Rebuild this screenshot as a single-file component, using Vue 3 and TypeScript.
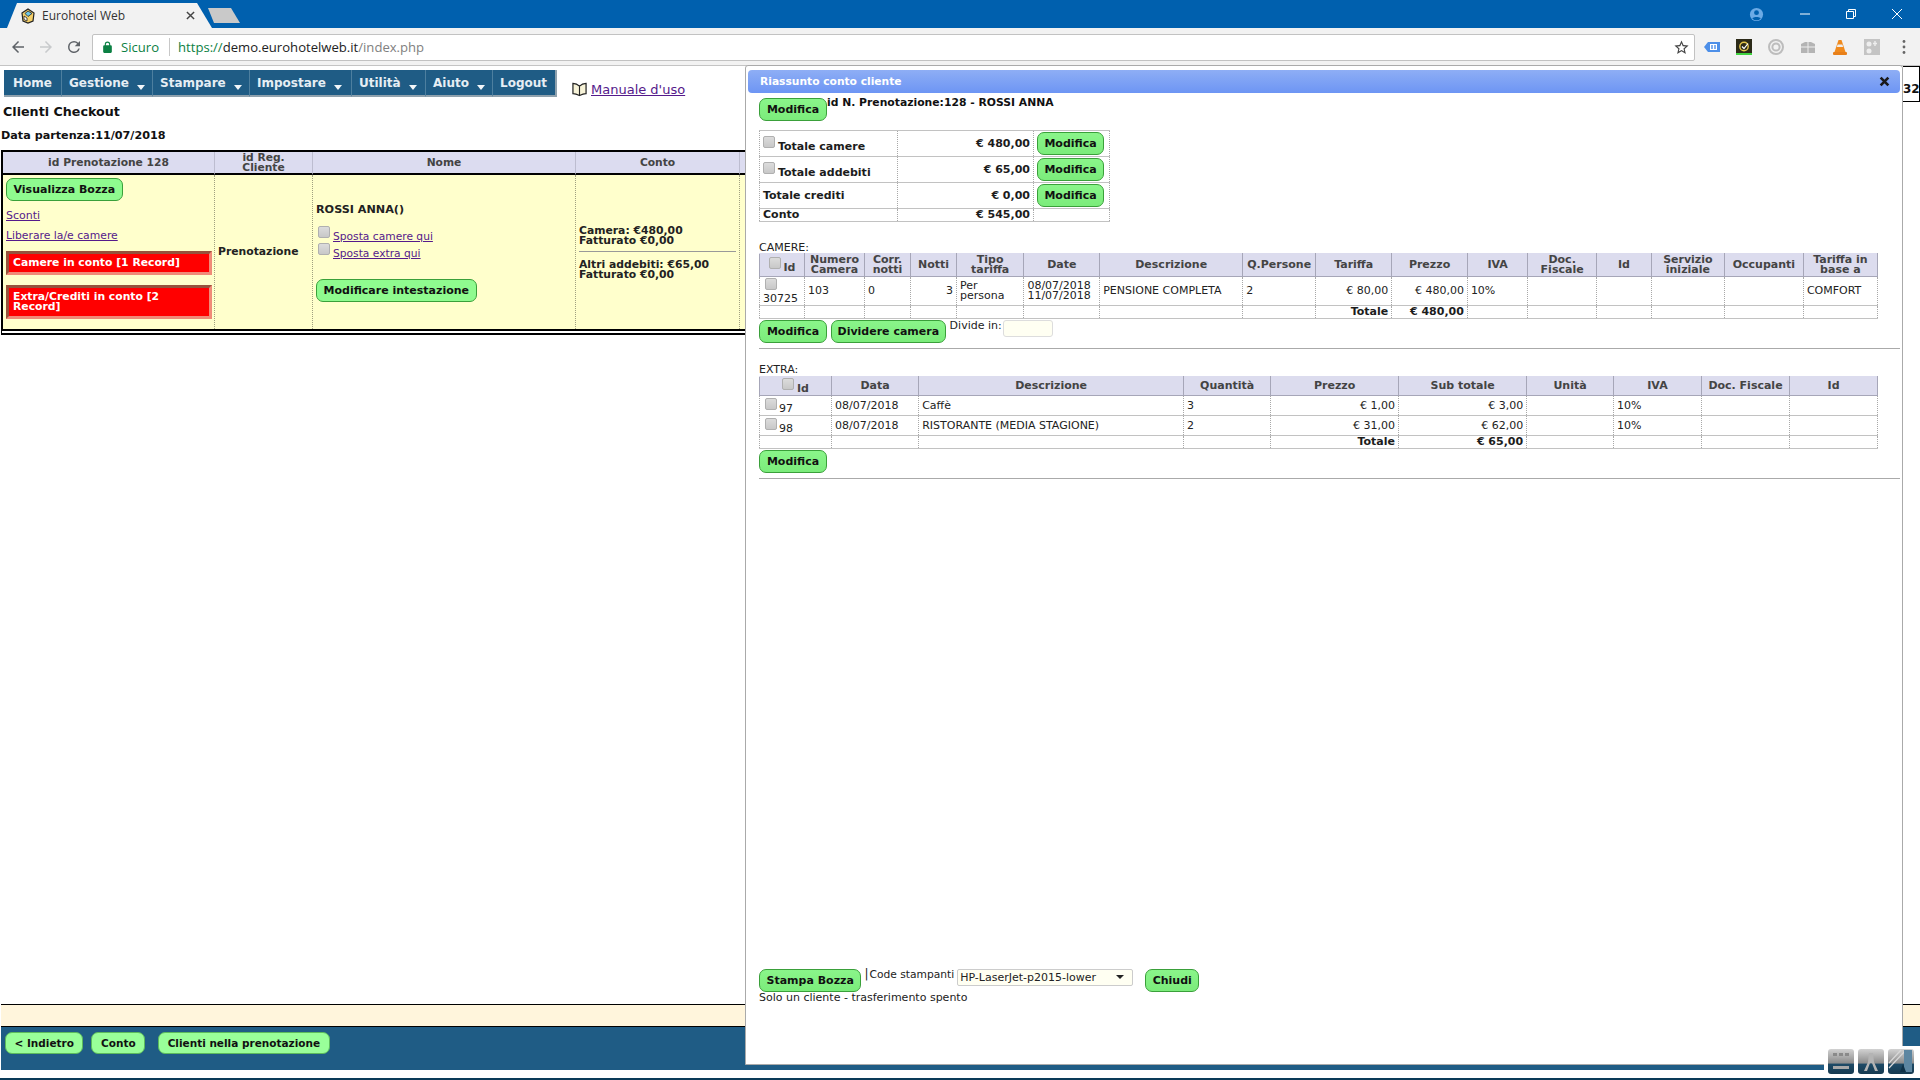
<script setup lang="ts">
const menu = [
  { label: 'Home', caret: false, width: 57 },
  { label: 'Gestione', caret: true, width: 91 },
  { label: 'Stampare', caret: true, width: 97 },
  { label: 'Impostare', caret: true, width: 102 },
  { label: 'Utilità', caret: true, width: 74 },
  { label: 'Aiuto', caret: true, width: 67 },
  { label: 'Logout', caret: false, width: 65 }
];

const summary = [
  { label: 'Totale camere', value: '€ 480,00', check: true },
  { label: 'Totale addebiti', value: '€ 65,00', check: true },
  { label: 'Totale crediti', value: '€ 0,00', check: false }
];

const roomCols = [45, 60, 46, 46, 67.4, 75.8, 143, 73, 76, 75.7, 60.5, 68.5, 55, 73, 79, 74];
const roomHead = [
  'Numero Camera', 'Corr. notti', 'Notti', 'Tipo tariffa', 'Date', 'Descrizione', 'Q.Persone', 'Tariffa',
  'Prezzo', 'IVA', 'Doc. Fiscale', 'Id', 'Servizio iniziale', 'Occupanti', 'Tariffa in base a'
];

const extraCols = [72, 87.2, 264.8, 87.3, 127.7, 128.2, 86.8, 88, 88.1, 88];
const extraHead = ['Data', 'Descrizione', 'Quantità', 'Prezzo', 'Sub totale', 'Unità', 'IVA', 'Doc. Fiscale', 'Id'];
const extraRows = [
  { id: '97', date: '08/07/2018', desc: 'Caffè', qty: '3', price: '€ 1,00', sub: '€ 3,00' },
  { id: '98', date: '08/07/2018', desc: 'RISTORANTE (MEDIA STAGIONE)', qty: '2', price: '€ 31,00', sub: '€ 62,00' }
];
</script>

<template>
  <div class="screen">
    <div class="tabstrip">
      <div class="tab">
        <svg class="favicon" viewBox="0 0 16 16">
          <path d="M2 5l6-4 6 4-1 8-5 2-5-2z" fill="#f4d06a" stroke="#222" stroke-width="1.2" />
          <path d="M8 3l4 2.5-4 3-3-3z" fill="#6ec6e8" stroke="#222" stroke-width=".8" />
          <path d="M4 8l3 2v3l-3-1.5z" fill="#fff" stroke="#222" stroke-width=".8" />
        </svg>
        <span class="tab-title">Eurohotel Web</span>
        <svg class="tab-close" viewBox="0 0 10 10"><path d="M1 1l8 8M9 1l-8 8" stroke="#444" stroke-width="1.6" /></svg>
      </div>
      <div class="new-tab"></div>
      <div class="window-controls">
        <svg class="profile" viewBox="0 0 16 16">
          <circle cx="8" cy="8" r="7" fill="#6cabe6" />
          <circle cx="8" cy="6" r="2.6" fill="#0060ae" />
          <path d="M3.5 12.2c1-2.2 8-2.2 9 0a6 6 0 0 1-9 0z" fill="#0060ae" />
        </svg>
        <svg class="win-icon" viewBox="0 0 12 12"><path d="M1 6h10" stroke="#fff" stroke-width="1" /></svg>
        <svg class="win-icon" viewBox="0 0 12 12"><path d="M1.5 3.5h7v7h-7zM3.5 3.5v-2h7v7h-2" fill="none" stroke="#fff" stroke-width="1" /></svg>
        <svg class="win-icon" viewBox="0 0 12 12"><path d="M1 1l10 10M11 1L1 11" stroke="#fff" stroke-width="1" /></svg>
      </div>
    </div>

    <div class="toolbar">
      <svg class="nav-icon" viewBox="0 0 24 24"><path d="M20 11H7.83l5.59-5.59L12 4l-8 8 8 8 1.41-1.41L7.83 13H20v-2z" fill="#5f6368" /></svg>
      <svg class="nav-icon" viewBox="0 0 24 24"><path d="M4 11h12.17l-5.59-5.59L12 4l8 8-8 8-1.41-1.41L16.17 13H4v-2z" fill="#c8cacc" /></svg>
      <svg class="nav-icon" viewBox="0 0 24 24"><path d="M17.65 6.35A7.95 7.95 0 0 0 12 4a8 8 0 1 0 7.75 10h-2.08A6 6 0 1 1 12 6c1.66 0 3.14.69 4.22 1.78L13 11h7V4l-2.35 2.35z" fill="#5f6368" /></svg>
      <div class="omnibox">
        <svg class="lock" viewBox="0 0 24 24"><path d="M18 8h-1V6a5 5 0 0 0-10 0v2H6a2 2 0 0 0-2 2v10a2 2 0 0 0 2 2h12a2 2 0 0 0 2-2V10a2 2 0 0 0-2-2zM9 8V6a3 3 0 0 1 6 0v2z" fill="#0b8043" /></svg>
        <span class="secure">Sicuro</span>
        <span class="url"><span class="url-scheme">https://</span>demo.eurohotelweb.it<span class="url-path">/index.php</span></span>
        <svg class="star" viewBox="0 0 24 24"><path d="M22 9.24l-7.19-.62L12 2 9.19 8.63 2 9.24l5.46 4.73L5.82 21 12 17.27 18.18 21l-1.63-7.03L22 9.24zM12 15.4l-3.76 2.27 1-4.28-3.32-2.88 4.38-.38L12 6.1l1.71 4.04 4.38.38-3.32 2.88 1 4.28L12 15.4z" fill="#444" /></svg>
      </div>
      <div class="extensions">
        <svg viewBox="0 0 16 16"><path d="M0 8l4-5h12v10H4z" fill="#4d8fe8" /><rect x="6" y="5" width="7" height="6" fill="#fff" /><path d="M8 6v4M11 6v4" stroke="#4d8fe8" stroke-width="1.4" /></svg>
        <svg viewBox="0 0 16 16"><rect width="16" height="16" fill="#2c2a18" /><rect y="14" width="16" height="2" fill="#3fd23f" /><circle cx="8" cy="7.5" r="4.2" fill="none" stroke="#e3c44a" stroke-width="1.4" /><path d="M6 7.5l2 2 4-5" fill="none" stroke="#fff" stroke-width="1.2" /></svg>
        <svg viewBox="0 0 16 16"><circle cx="8" cy="8" r="7" fill="none" stroke="#bdbdbd" stroke-width="2" /><circle cx="8" cy="8" r="3.6" fill="none" stroke="#bdbdbd" stroke-width="2" /></svg>
        <svg viewBox="0 0 16 16"><path d="M1 5l4-2h6l4 2v9H1z" fill="#b4b4b4" /><path d="M8 3v11M1 8h14" stroke="#eee" stroke-width="1" /></svg>
        <svg viewBox="0 0 16 16"><path d="M6.5 1h3l4 12h-11z" fill="#f08a1d" /><path d="M5.6 5.5h4.8l.7 2.5H4.8z" fill="#eee" /><rect x="1" y="13" width="14" height="3" rx="1" fill="#e8801a" /></svg>
        <svg viewBox="0 0 16 16"><rect width="16" height="16" fill="#c4c4c4" /><circle cx="5" cy="5" r="2.5" fill="#eee" /><circle cx="5" cy="12" r="2.5" fill="#eee" /><path d="M11 2v5M9 4.5h4" stroke="#eee" stroke-width="1.4" /></svg>
        <svg class="dots" viewBox="0 0 4 16"><circle cx="2" cy="2.5" r="1.4" fill="#666" /><circle cx="2" cy="8" r="1.4" fill="#666" /><circle cx="2" cy="13.5" r="1.4" fill="#666" /></svg>
      </div>
    </div>

    <div class="page">
      <nav class="menu">
        <a v-for="m in menu" :key="m.label" class="menu-item" :style="{ width: m.width + 'px' }">
          {{ m.label }}<i v-if="m.caret" class="caret"></i>
        </a>
        <div class="manual">
          <svg class="book" viewBox="0 0 16 16">
            <path d="M1 2c2 0 5 1 7 3 2-2 5-3 7-3v11c-2 0-5 1-7 2-2-1-5-2-7-2z" fill="#f7f3d8" stroke="#222" stroke-width="1.3" />
            <path d="M8 5v10" stroke="#222" stroke-width="1.2" />
          </svg>
          <a class="link manual-link">Manuale d'uso</a>
        </div>
      </nav>

      <h2 class="page-title">Clienti Checkout</h2>
      <div class="departure">Data partenza:11/07/2018</div>

      <table class="checkout">
        <colgroup>
          <col style="width: 212px" />
          <col style="width: 98px" />
          <col style="width: 263px" />
          <col style="width: 164px" />
          <col />
        </colgroup>
        <thead>
          <tr>
            <th>id Prenotazione 128</th>
            <th>id Reg.<br />Cliente</th>
            <th>Nome</th>
            <th>Conto</th>
            <th></th>
          </tr>
        </thead>
        <tbody>
          <tr>
            <td class="col-actions">
              <button class="btn">Visualizza Bozza</button>
              <a class="link sconti">Sconti</a>
              <a class="link liberare">Liberare la/e camere</a>
              <div class="alert">Camere in conto [1 Record]</div>
              <div class="alert alert-tall">Extra/Crediti in conto [2 Record]</div>
            </td>
            <td class="col-type">Prenotazione</td>
            <td class="col-name">
              <div class="guest">ROSSI ANNA()</div>
              <label class="move"><input type="checkbox" class="check" /><a class="link">Sposta camere qui</a></label>
              <label class="move"><input type="checkbox" class="check" /><a class="link">Sposta extra qui</a></label>
              <button class="btn heading-btn">Modificare intestazione</button>
            </td>
            <td class="col-bill">
              <div>Camera: €480,00<br />Fatturato €0,00</div>
              <hr class="bill-line" />
              <div>Altri addebiti: €65,00<br />Fatturato €0,00</div>
            </td>
            <td></td>
          </tr>
        </tbody>
      </table>

      <div class="spacer"></div>
      <div class="notice"></div>
      <div class="footer">
        <button class="btn btn-foot">&lt; Indietro</button>
        <button class="btn btn-foot">Conto</button>
        <button class="btn btn-foot">Clienti nella prenotazione</button>
      </div>
      <div class="strip"></div>
      <div class="taskbar"></div>

      <div class="peek">32</div>

      <section class="dialog">
        <header class="dialog-title">
          <span>Riassunto conto cliente</span>
          <svg class="dialog-close" viewBox="0 0 10 10"><path d="M1.5 1.5l7 7M8.5 1.5l-7 7" stroke="#1a1a1a" stroke-width="2.4" /></svg>
        </header>
        <div class="dialog-body">
          <div class="booking">
            <button class="btn btn-modal">Modifica</button>
            <strong class="booking-title">id N. Prenotazione:128 - ROSSI ANNA</strong>
          </div>

          <table class="grid summary">
            <colgroup>
              <col style="width: 137.5px" />
              <col style="width: 136.5px" />
              <col style="width: 76px" />
            </colgroup>
            <tr v-for="s in summary" :key="s.label" class="summary-row">
              <td class="strong">
                <input v-if="s.check" type="checkbox" class="check check-summary" /><span :class="{ 'low-label': s.check }">{{ s.label }}</span>
              </td>
              <td class="strong right">{{ s.value }}</td>
              <td class="center"><button class="btn btn-modal">Modifica</button></td>
            </tr>
            <tr class="total-row">
              <td class="strong">Conto</td>
              <td class="strong right">€ 545,00</td>
              <td></td>
            </tr>
          </table>

          <div class="section-label rooms-label">CAMERE:</div>
          <table class="grid wide">
            <colgroup>
              <col v-for="(w, i) in roomCols" :key="i" :style="{ width: w + 'px' }" />
            </colgroup>
            <thead>
              <tr class="head-tall">
                <th><input type="checkbox" class="check" /><span class="low-id">Id</span></th>
                <th v-for="h in roomHead" :key="h">{{ h }}</th>
              </tr>
            </thead>
            <tbody>
              <tr class="room-row">
                <td><input type="checkbox" class="check check-block" />30725</td>
                <td>103</td>
                <td>0</td>
                <td class="right">3</td>
                <td>Per persona</td>
                <td class="dates">08/07/2018<br />11/07/2018</td>
                <td>PENSIONE COMPLETA</td>
                <td>2</td>
                <td class="right">€ 80,00</td>
                <td class="right">€ 480,00</td>
                <td>10%</td>
                <td></td>
                <td></td>
                <td></td>
                <td></td>
                <td>COMFORT</td>
              </tr>
              <tr class="total-row">
                <td v-for="n in 8" :key="n"></td>
                <td class="strong right">Totale</td>
                <td class="strong right">€ 480,00</td>
                <td v-for="n in 6" :key="'r' + n"></td>
              </tr>
            </tbody>
          </table>

          <div class="room-actions">
            <button class="btn btn-modal">Modifica</button>
            <button class="btn btn-modal">Dividere camera</button>
            <span class="divide">Divide in:</span>
            <input type="text" class="divide-input" />
          </div>
          <hr class="rule" />

          <div class="section-label extra-label">EXTRA:</div>
          <table class="grid wide">
            <colgroup>
              <col v-for="(w, i) in extraCols" :key="i" :style="{ width: w + 'px' }" />
            </colgroup>
            <thead>
              <tr class="head-short">
                <th class="extra-id"><input type="checkbox" class="check" /><span class="low-id">Id</span></th>
                <th v-for="h in extraHead" :key="h">{{ h }}</th>
              </tr>
            </thead>
            <tbody>
              <tr v-for="r in extraRows" :key="r.id" class="extra-row">
                <td><input type="checkbox" class="check check-row" /><span class="low-id-plain">{{ r.id }}</span></td>
                <td>{{ r.date }}</td>
                <td>{{ r.desc }}</td>
                <td>{{ r.qty }}</td>
                <td class="right">{{ r.price }}</td>
                <td class="right">{{ r.sub }}</td>
                <td></td>
                <td>10%</td>
                <td></td>
                <td></td>
              </tr>
              <tr class="total-row">
                <td v-for="n in 4" :key="n"></td>
                <td class="strong right">Totale</td>
                <td class="strong right">€ 65,00</td>
                <td v-for="n in 4" :key="'e' + n"></td>
              </tr>
            </tbody>
          </table>
          <button class="btn btn-modal extra-edit">Modifica</button>
          <hr class="rule" />

          <div class="print-row">
            <button class="btn btn-modal">Stampa Bozza</button>
            <span class="print-sep">|</span>
            <span class="print-label">Code stampanti</span>
            <span class="select">HP-LaserJet-p2015-lower<i class="select-arrow"></i></span>
            <button class="btn btn-modal close-btn">Chiudi</button>
          </div>
          <div class="transfer">Solo un cliente - trasferimento spento</div>
        </div>
      </section>

      <div class="dock">
        <svg class="dock-icon" viewBox="0 0 26 25">
          <rect x="5" y="4" width="4" height="3" fill="#8a8a8a" />
          <rect x="11" y="4" width="4" height="3" fill="#8a8a8a" />
          <rect x="17" y="4" width="4" height="3" fill="#8a8a8a" />
          <rect x="5" y="17" width="16" height="3" fill="#a8a8a8" />
        </svg>
        <svg class="dock-icon" viewBox="0 0 26 25">
          <path d="M11 4h4l1 9 4 9h-3l-3-8h-2l-3 8H6l4-9z" fill="#b4b4b4" />
        </svg>
        <svg class="dock-icon" viewBox="0 0 26 25">
          <path d="M1 14L13 1M1 19L17 2" stroke="#d8d8d8" stroke-width="1.2" />
          <rect x="16" y="1" width="8" height="22" fill="#5d86a1" />
          <path d="M12 23l3-8 3 8z" fill="#0f3147" />
        </svg>
      </div>
    </div>
  </div>
</template>

<style>
html,
body {
  margin: 0;
  background: #fff;
}
</style>

<style scoped>
.screen {
  width: 1920px;
  height: 1080px;
  overflow: hidden;
  display: flex;
  flex-direction: column;
  font-family: "DejaVu Sans", Verdana, sans-serif;
  font-size: 11px;
  line-height: 10px;
  color: #222;
}

/* browser chrome */
.tabstrip {
  height: 28px;
  flex: none;
  display: flex;
  align-items: flex-end;
  padding-left: 7px;
  background: #0060ae;
}

.tab {
  width: 205px;
  height: 25px;
  display: flex;
  align-items: center;
  padding: 0 17px 0 13px;
  box-sizing: border-box;
  background: #f2f2f2;
  clip-path: polygon(0 100%, 10px 0, 190px 0, 100% 100%);
}

.favicon {
  width: 16px;
  height: 16px;
  flex: none;
}

.tab-title {
  margin-left: 6px;
  flex: 1;
  font-family: "Open Sans", sans-serif;
  font-size: 12px;
  line-height: 16px;
  color: #333;
}

.tab-close {
  width: 9px;
  height: 9px;
}

.new-tab {
  width: 32px;
  height: 15px;
  margin: 0 0 5px -4px;
  background: #c9c9c9;
  clip-path: polygon(0 0, 23px 0, 100% 100%, 6px 100%);
}

.window-controls {
  margin-left: auto;
  align-self: stretch;
  display: flex;
  align-items: center;
  padding-right: 17px;
  gap: 34px;
}

.profile {
  width: 15px;
  height: 15px;
  margin-right: 1px;
}

.win-icon {
  width: 12px;
  height: 12px;
}

.toolbar {
  height: 38px;
  flex: none;
  display: flex;
  align-items: center;
  box-sizing: border-box;
  padding: 1px 0 0 9px;
  background: #f2f2f2;
  border-bottom: 1px solid #c4c4c4;
}

.nav-icon {
  width: 18px;
  height: 18px;
  margin-right: 10px;
}

.omnibox {
  width: 1603px;
  height: 27px;
  margin-left: -1px;
  display: flex;
  align-items: center;
  box-sizing: border-box;
  padding-left: 8px;
  background: #fff;
  border: 1px solid #c2c2c2;
  border-radius: 2px;
  font-family: "Open Sans", sans-serif;
  font-size: 13.1px;
  line-height: 18px;
}

.lock {
  width: 13px;
  height: 13px;
}

.secure {
  margin-left: 7px;
  padding-right: 10px;
  color: #0b8043;
  border-right: 1px solid #c8c8c8;
}

.url {
  margin-left: 8px;
  color: #222;
}

.url-scheme {
  color: #0b8043;
}

.url-path {
  color: #808080;
}

.star {
  width: 17px;
  height: 17px;
  margin-left: auto;
  margin-right: 4px;
}

.extensions {
  display: flex;
  align-items: center;
  margin-left: 9px;
  gap: 16px;
}

.extensions svg {
  width: 16px;
  height: 16px;
}

.extensions .dots {
  width: 4px;
  margin-left: 6px;
}

/* page */
.page {
  position: relative;
  flex: 1;
  display: flex;
  flex-direction: column;
  min-height: 0;
}

.menu {
  height: 27px;
  margin: 4px 0 0 4px;
  display: flex;
  flex: none;
}

.menu-item {
  height: 27px;
  flex: none;
  display: flex;
  align-items: center;
  padding-left: 7px;
  box-sizing: border-box;
  background: #1f5c85;
  border-left: 1px solid #4d7f9f;
  border-bottom: 2px solid #8fa1ad;
  color: #e6eef4;
  font-size: 12px;
  font-weight: 700;
  white-space: nowrap;
}

.menu-item:first-child {
  border-left: none;
  padding-left: 9px;
}

.menu-item:nth-child(7) {
  border-right: 2px solid #8fa1ad;
}

.caret {
  width: 0;
  height: 0;
  margin: 9px 0 0 8px;
  border: 4.5px solid transparent;
  border-top: 5px solid #f2f6f9;
  border-bottom: none;
}

.manual {
  display: flex;
  align-items: flex-end;
  margin-left: 15px;
}

.book {
  width: 15px;
  height: 16px;
}

.link {
  color: #551a8b;
  text-decoration: underline;
  cursor: pointer;
}

.manual-link {
  margin-left: 4px;
  font-size: 13px;
  line-height: 14px;
}

.page-title {
  margin: 7px 0 0 3px;
  font-size: 12.7px;
  line-height: 16px;
  font-weight: 700;
  color: #111;
}

.departure {
  margin: 9px 0 0 1px;
  font-size: 11.2px;
  line-height: 14px;
  font-weight: 700;
  color: #111;
}

.checkout {
  width: 1880px;
  margin: 7px 0 0 1px;
  flex: none;
  table-layout: fixed;
  border-collapse: separate;
  border-spacing: 0;
  border: 2px solid #000;
  border-bottom-width: 6px;
  border-bottom-style: double;
  height: 185px;
  box-sizing: border-box;
}

.checkout th {
  height: 21px;
  padding: 0 2px;
  background: #dcdcf0;
  border-right: 1px solid #bdbdd0;
  border-bottom: 2px solid #000;
  color: #444;
  font-size: 10.7px;
  font-weight: 700;
  text-align: center;
}

.checkout td {
  padding: 0 3px;
  background: #ffffcc;
  border-right: 1px dotted #a0a080;
  vertical-align: top;
  font-weight: 400;
}

.col-actions .btn {
  display: block;
  margin-top: 3px;
}

.sconti {
  display: block;
  margin-top: 10px;
  font-size: 11px;
}

.liberare {
  display: block;
  margin-top: 10px;
  font-size: 10.8px;
}

.alert {
  margin-top: 10px;
  padding: 3px 4px;
  width: 206px;
  box-sizing: border-box;
  min-height: 24px;
  display: flex;
  align-items: center;
  background: #f00;
  border: 3px solid;
  border-color: #96523c #f08a78 #f08a78 #96523c;
  color: #fff;
  font-size: 10.8px;
  font-weight: 700;
}

.alert-tall {
  min-height: 34px;
}

.checkout td.col-type {
  vertical-align: middle;
  font-size: 10.8px;
  font-weight: 700;
}

.guest {
  margin-top: 30px;
  font-size: 11.2px;
  font-weight: 700;
}

.move {
  display: flex;
  align-items: flex-end;
  font-size: 10.7px;
  height: 17px;
  margin-left: 2px;
}

.move:first-of-type {
  margin-top: 10px;
}

.move .check {
  margin-right: 3px;
  margin-bottom: 4px;
}

.heading-btn {
  margin-top: 20px;
}

.checkout td.col-bill {
  padding-top: 51px;
  font-size: 10.8px;
  font-weight: 700;
}

.bill-line {
  margin: 5px 0 8px;
  border: none;
  border-top: 1px solid #999;
}

.spacer {
  flex: 1;
}

.notice {
  height: 23px;
  margin-left: 1px;
  flex: none;
  box-sizing: border-box;
  background: #fff5dc;
  border-top: 1px solid #000;
  border-bottom: 1px solid #000;
}

.footer {
  height: 43px;
  flex: none;
  display: flex;
  gap: 8px;
  padding: 5px 0 0 4px;
  margin-left: 1px;
  box-sizing: border-box;
  background: #1f5c85;
}

.strip {
  height: 8px;
  flex: none;
  background: #fff;
}

.taskbar {
  height: 2px;
  flex: none;
  background: #0a3a58;
}

/* buttons */
.btn {
  height: 23px;
  padding: 0 6.5px;
  box-sizing: border-box;
  background: #8ffb8f;
  border: 1px solid #3aa03a;
  border-radius: 7px;
  color: #111;
  font-family: "DejaVu Sans", Verdana, sans-serif;
  font-size: 11px;
  font-weight: 700;
  white-space: nowrap;
}

.btn-foot {
  height: 22px;
  padding: 0 8.5px;
  background: #99ff99;
  border-color: #5cba5c;
  font-size: 10.5px;
}

.btn-foot:last-child {
  margin-left: 5px;
}

.btn-modal {
  background: linear-gradient(#8af58a, #7bec7b);
}

/* dialog */
.peek {
  position: absolute;
  top: 0;
  right: 0;
  width: 17px;
  height: 36px;
  box-sizing: border-box;
  overflow: hidden;
  padding-top: 17px;
  background: #fff;
  border: 1px solid #000;
  border-left: none;
  font-size: 12px;
  font-weight: 700;
  text-align: right;
  color: #111;
}

.dialog {
  position: absolute;
  top: -1px;
  left: 745px;
  width: 1158px;
  height: 1000px;
  display: flex;
  flex-direction: column;
  box-sizing: border-box;
  padding: 4px 2px 0;
  background: #fff;
  border: 1px solid #aaa;
  border-radius: 3px 3px 0 0;
}

.dialog-title {
  height: 23px;
  flex: none;
  display: flex;
  align-items: center;
  justify-content: space-between;
  padding: 0 10px 0 12px;
  background: linear-gradient(#8eaef5, #6d95f4);
  border-radius: 4px;
  color: #fff;
  font-size: 10.7px;
  font-weight: 700;
}

.dialog-close {
  width: 11px;
  height: 11px;
}

.dialog-body {
  flex: 1;
  display: flex;
  flex-direction: column;
  align-items: flex-start;
  padding: 5px 0 61px 11px;
  min-height: 0;
}

.booking {
  display: flex;
  align-items: flex-start;
}

.booking-title {
  font-size: 10.8px;
  color: #111;
}

.booking .btn,
.room-actions .btn:first-child,
.extra-edit {
  width: 68px;
}

.room-actions .btn:nth-child(2) {
  padding: 0 5.5px;
}

.grid {
  table-layout: fixed;
  border-collapse: collapse;
  flex: none;
}

.grid td,
.grid th {
  padding: 0 3px;
  border-top: 1px solid #c2c2c2;
  border-bottom: 1px solid #c2c2c2;
  border-left: 1px dotted #a8a8a8;
  border-right: 1px dotted #a8a8a8;
  font-weight: 400;
  overflow: hidden;
}

.grid th {
  background: #dcdcee;
  border-color: #a6a6b8;
  border-style: solid;
  border-top-color: #dcdcee;
  color: #444;
  font-size: 11px;
  font-weight: 700;
  text-align: center;
}

.summary {
  width: 350px;
  margin-top: 9px;
}

.summary-row td {
  height: 25px;
  font-size: 11px;
}

.total-row td {
  height: 12px;
  padding-top: 0;
  padding-bottom: 0;
}

.grid td.strong {
  font-weight: 700;
  color: #1c1c1c;
}

.grid td.right {
  text-align: right;
}

.grid td.center {
  text-align: center;
}

.grid td.center .btn {
  margin-left: -2px;
}

.check-summary {
  margin-left: 4px;
}

.low-label {
  margin-left: 3px;
  vertical-align: -2px;
}

.wide {
  width: 1118.5px;
}

.section-label {
  line-height: 10px;
}

.rooms-label {
  margin-top: 21px;
}

.extra-label {
  margin-top: 16px;
  margin-bottom: 1px;
}

.head-tall th {
  height: 22px;
}

.head-short th {
  height: 18px;
}

.room-row td {
  height: 28px;
}

.dates {
  white-space: nowrap;
}

.low-id {
  margin-left: 3px;
  vertical-align: -2px;
}

.low-id-plain {
  margin-left: 2px;
  vertical-align: -3px;
}

.extra-row td {
  height: 19px;
}

.check {
  appearance: none;
  width: 12px;
  height: 12px;
  margin: 0;
  box-sizing: border-box;
  flex: none;
  background: linear-gradient(#dcdcdc, #c8c8c8);
  border: 1px solid #b0b0b0;
  border-radius: 2px;
  vertical-align: baseline;
}

.check-row {
  margin-left: 2px;
  vertical-align: -1px;
}

.check-block {
  display: block;
  margin: 0 0 4px 2px;
}

.room-actions {
  margin-top: 1px;
  display: flex;
  align-items: flex-start;
  gap: 4px;
}

.divide {
  margin-top: 1px;
}

.divide-input {
  width: 50px;
  height: 17px;
  margin-left: -3px;
  box-sizing: border-box;
  background: #fffff2;
  border: 1px solid #ddd;
  border-radius: 3px;
}

.rule {
  width: 1141px;
  margin: 5px 0 0;
  flex: none;
  border: none;
  border-top: 1px solid #aaa;
}

.extra-edit {
  margin-top: 1px;
}

.print-row {
  margin-top: auto;
  display: flex;
  align-items: flex-start;
}

.print-sep {
  margin: -1px 0 0 3px;
  line-height: 12px;
  font-size: 12px;
}

.print-label {
  margin: 1px 0 0 1px;
  font-size: 10.7px;
}

.select {
  width: 176px;
  height: 17px;
  margin-left: 3px;
  display: flex;
  align-items: center;
  position: relative;
  box-sizing: border-box;
  padding-left: 2px;
  background: #fffff2;
  border: 1px solid #ccc;
  border-radius: 2px;
}

.select-arrow {
  position: absolute;
  right: 8px;
  top: 5px;
  border: 4px solid transparent;
  border-top: 4px solid #222;
  border-bottom: none;
}

.close-btn {
  margin-left: 12px;
}

.transfer {
  line-height: 11px;
}

.dock {
  position: absolute;
  left: 1824px;
  top: 980px;
  width: 96px;
  height: 32px;
  display: flex;
  align-items: flex-start;
  gap: 4px;
  padding: 3px 0 0 4px;
  box-sizing: border-box;
  background: #fff;
}

.dock-icon {
  width: 26px;
  height: 25px;
  background: linear-gradient(#d2d2d2, #8e8e8e 55%, #1e4a66 62%, #163a50);
  border-radius: 3px;
}
</style>
